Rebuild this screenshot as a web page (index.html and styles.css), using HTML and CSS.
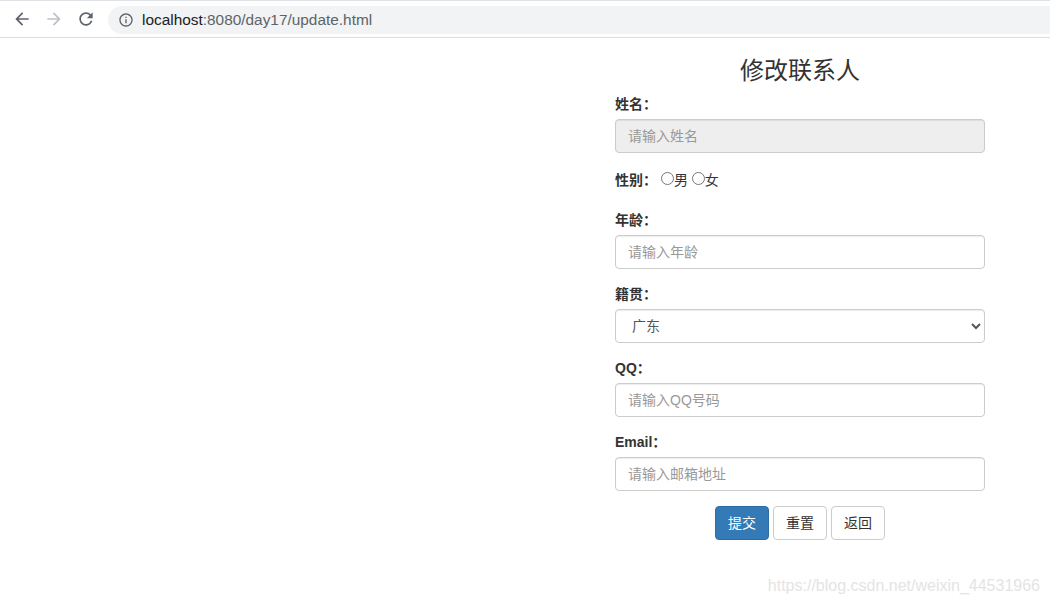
FILE: index.html
```html
<!DOCTYPE html>
<html lang="zh-CN">
<head>
<meta charset="utf-8">
<title>修改联系人</title>
<link rel="stylesheet" href="styles.css">
</head>
<body>
<header class="toolbar">
  <span class="nav-btn">
    <svg viewBox="0 0 24 24" width="20" height="20"><path fill="#5f6368" d="M20 11H7.83l5.59-5.59L12 4l-8 8 8 8 1.41-1.41L7.83 13H20v-2z"/></svg>
  </span>
  <span class="nav-btn">
    <svg viewBox="0 0 24 24" width="20" height="20"><path fill="#bdc1c6" d="M12 4l-1.41 1.41L16.17 11H4v2h12.17l-5.58 5.59L12 20l8-8z"/></svg>
  </span>
  <span class="nav-btn">
    <svg viewBox="0 0 24 24" width="20" height="20"><path fill="#5f6368" d="M17.65 6.35C16.2 4.9 14.21 4 12 4c-4.42 0-7.99 3.58-7.99 8s3.57 8 7.99 8c3.73 0 6.84-2.550 7.730-6h-2.080c-.82 2.33-3.04 4-5.65 4-3.31 0-6-2.69-6-6s2.69-6 6-6c1.66 0 3.14.69 4.22 1.78L13 11h7V4l-2.35 2.35z"/></svg>
  </span>
  <div class="omnibox">
    <svg class="info" viewBox="0 0 24 24" width="16" height="16"><path fill="#5f6368" d="M11 7h2v2h-2zm0 4h2v6h-2zm1-9C6.48 2 2 6.48 2 12s4.48 10 10 10 10-4.48 10-10S17.52 2 12 2zm0 18c-4.41 0-8-3.590-8-8s3.59-8 8-8 8 3.59 8 8-3.59 8-8 8z"/></svg>
    <span class="url"><span class="host">localhost</span>:8080/day17/update.html</span>
  </div>
</header>

<main class="container">
  <h3 class="title">修改联系人</h3>
  <form class="form">
    <div class="form-group">
      <label for="name">姓名：</label>
      <input type="text" id="name" class="form-control" placeholder="请输入姓名" readonly>
    </div>
    <div class="form-group">
      <label>性别：</label>
      <input type="radio" name="sex" value="男"><span>男</span>
      <input type="radio" name="sex" value="女"><span>女</span>
    </div>
    <div class="form-group">
      <label for="age">年龄：</label>
      <input type="text" id="age" class="form-control" placeholder="请输入年龄">
    </div>
    <div class="form-group">
      <label for="address">籍贯：</label>
      <select id="address" class="form-control">
        <option>广东</option>
        <option>广西</option>
        <option>湖南</option>
      </select>
    </div>
    <div class="form-group">
      <label for="qq">QQ：</label>
      <input type="text" id="qq" class="form-control" placeholder="请输入QQ号码">
    </div>
    <div class="form-group">
      <label for="email">Email：</label>
      <input type="text" id="email" class="form-control" placeholder="请输入邮箱地址">
    </div>
    <div class="form-group actions">
      <button type="button" class="btn btn-primary">提交</button>
      <button type="button" class="btn btn-default">重置</button>
      <button type="button" class="btn btn-default">返回</button>
    </div>
  </form>
</main>

<div class="watermark">https://blog.csdn.net/weixin_44531966</div>
</body>
</html>
```

FILE: styles.css
```css
* { box-sizing: border-box; }

html, body {
  margin: 0;
  padding: 0;
  background: #fff;
}

body {
  font-family: "Liberation Sans", Arial, "Noto Sans CJK SC", sans-serif;
  font-size: 14px;
  line-height: 1.42857143;
  color: #333;
  width: 1050px;
  height: 606px;
  overflow: hidden;
  position: relative;
}

/* browser toolbar */
.toolbar {
  height: 38px;
  border-top: 1px solid #dee1e6;
  border-bottom: 1px solid #dadce0;
  display: flex;
  align-items: center;
  padding-left: 6px;
  background: #fff;
}

.nav-btn {
  width: 32px;
  height: 32px;
  display: flex;
  align-items: center;
  justify-content: center;
  flex: none;
}

.omnibox {
  margin-left: 6px;
  flex: 1;
  height: 28px;
  margin-top: 1px;
  background: #f1f3f4;
  border-radius: 14px 0 0 14px;
  display: flex;
  align-items: center;
  padding-left: 10px;
}

.info { flex: none; }

.url {
  margin-left: 8px;
  font-family: "Liberation Sans", Arial, sans-serif;
  font-size: 15.4px;
  color: #5f6368;
}

.url .host { color: #202124; }

/* page */
.container {
  width: 400px;
  margin-left: 600px;
  padding: 0 15px;
}

.title {
  margin: 20px 0 10px;
  font-size: 24px;
  font-weight: 400;
  line-height: 1.1;
  text-align: center;
  color: #333;
}

.form-group { margin-bottom: 15px; }

label {
  display: inline-block;
  max-width: 100%;
  margin-bottom: 5px;
  font-weight: bold;
}

.form-control {
  display: block;
  width: 100%;
  height: 34px;
  padding: 6px 12px;
  font-family: inherit;
  font-size: 14px;
  line-height: 1.42857143;
  color: #555;
  background-color: #fff;
  border: 1px solid #ccc;
  border-radius: 4px;
  box-shadow: inset 0 1px 1px rgba(0, 0, 0, .075);
}

.form-control::placeholder { color: #999; opacity: 1; }

.form-control[readonly] {
  background-color: #eee;
  opacity: 1;
}

input[type="radio"] {
  margin: 4px 0 0;
  line-height: normal;
  width: 13px;
  height: 13px;
}

.actions { text-align: center; }

.btn {
  display: inline-block;
  padding: 6px 12px;
  margin: 0;
  font-family: inherit;
  font-size: 14px;
  font-weight: normal;
  line-height: 1.42857143;
  text-align: center;
  white-space: nowrap;
  vertical-align: middle;
  cursor: pointer;
  border: 1px solid transparent;
  border-radius: 4px;
}

.btn-primary {
  color: #fff;
  background-color: #337ab7;
  border-color: #2e6da4;
}

.btn-default {
  color: #333;
  background-color: #fff;
  border-color: #ccc;
}

.watermark {
  position: absolute;
  right: 10px;
  bottom: 8px;
  font-family: "Liberation Sans", Arial, sans-serif;
  font-size: 16px;
  color: #e4e4e4;
  white-space: nowrap;
}
```
